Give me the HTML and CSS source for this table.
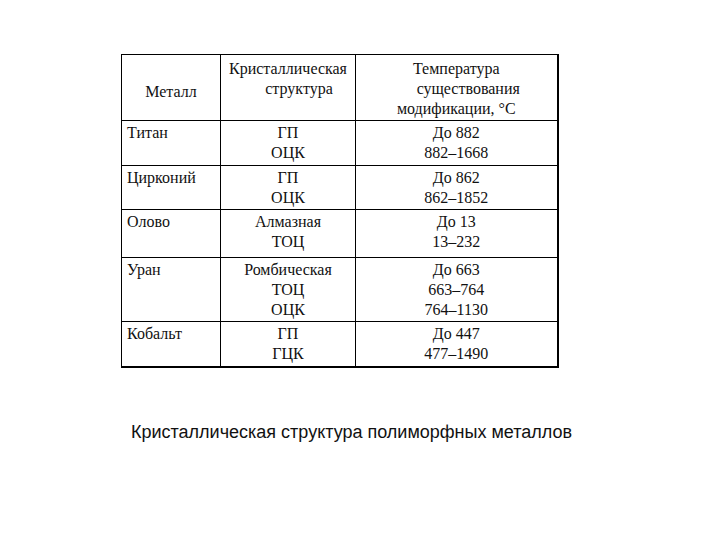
FILE: index.html
```html
<!DOCTYPE html>
<html lang="ru">
<head>
<meta charset="utf-8">
<link rel="stylesheet" href="styles.css">
</head>
<body>
<div class="page">
  <table class="metals">
    <colgroup>
      <col class="c1"><col class="c2"><col class="c3">
    </colgroup>
    <tr class="head">
      <td class="name mid">Металл</td>
      <td class="ctr">Кристаллическая<br><span class="s2">структура</span></td>
      <td class="ctr">Температура<br><span class="s3">существования</span><br>модификации, °С</td>
    </tr>
    <tr class="r1">
      <td class="name">Титан</td>
      <td class="ctr">ГП<br>ОЦК</td>
      <td class="ctr">До 882<br>882–1668</td>
    </tr>
    <tr class="r2">
      <td class="name">Цирконий</td>
      <td class="ctr">ГП<br>ОЦК</td>
      <td class="ctr">До 862<br>862–1852</td>
    </tr>
    <tr class="r3">
      <td class="name">Олово</td>
      <td class="ctr">Алмазная<br>ТОЦ</td>
      <td class="ctr">До 13<br>13–232</td>
    </tr>
    <tr class="r4">
      <td class="name">Уран</td>
      <td class="ctr">Ромбическая<br>ТОЦ<br>ОЦК</td>
      <td class="ctr">До 663<br>663–764<br>764–1130</td>
    </tr>
    <tr class="r5">
      <td class="name">Кобальт</td>
      <td class="ctr">ГП<br>ГЦК</td>
      <td class="ctr">До 447<br>477–1490</td>
    </tr>
  </table>
  <p class="caption">Кристаллическая структура полиморфных металлов</p>
</div>
</body>
</html>
```
FILE: styles.css
```css
html, body {
  margin: 0;
  padding: 0;
  background: #ffffff;
}
.page {
  padding: 54px 0 0 121px;
}
.metals {
  border-collapse: collapse;
  table-layout: fixed;
  width: 436px;
  font-family: "Liberation Serif", "Times New Roman", serif;
  font-size: 16px;
  line-height: 20px;
  color: #111;
}
.c1 { width: 99px; }
.c2 { width: 135px; }
.c3 { width: 202px; }
.metals td {
  border: 1px solid #000;
  vertical-align: top;
  padding: 2px 5px 0 5px;
}
.metals tr:last-child td { border-bottom-width: 2px; }
.metals td:last-child { border-right-width: 2px; }
.head td { padding-top: 4px; }
.head td.mid { vertical-align: middle; text-align: center; padding-top: 8px; }
.ctr { text-align: center; }
.s2 { padding-left: 22px; }
.s3 { padding-left: 24px; }
.head { height: 66px; }
.r1 { height: 45px; }
.r2 { height: 44px; }
.r3 { height: 48px; }
.r4 { height: 64px; }
.r5 { height: 45px; }
.caption {
  margin: 54px 0 0 10px;
  font-family: "Liberation Sans", Arial, sans-serif;
  font-size: 18px;
  color: #111;
}
```
